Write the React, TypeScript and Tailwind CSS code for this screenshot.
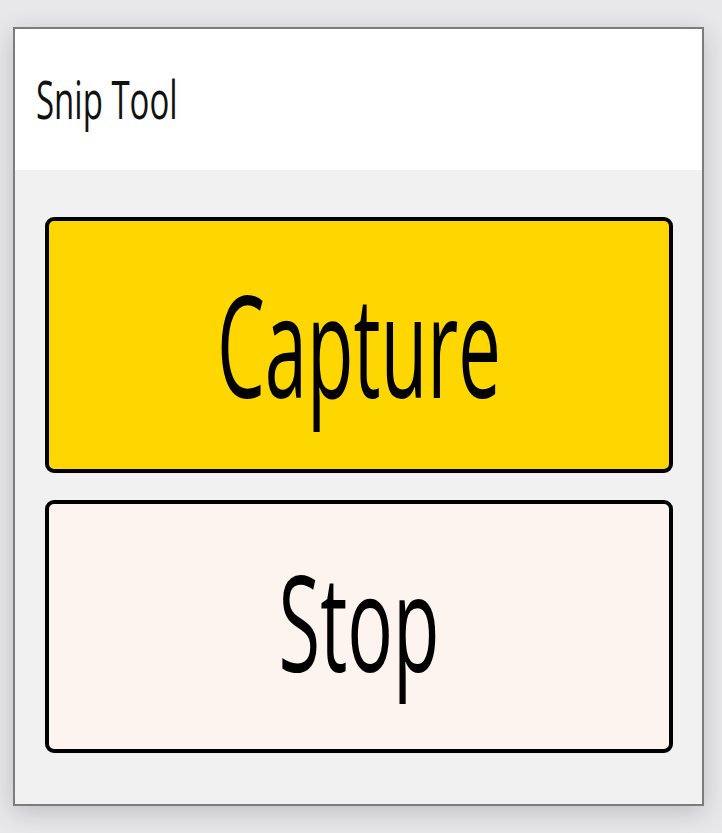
import React from 'react';

const App = () => {
    return (
        <div className="w-[722px] h-[833px] bg-[#e8e8ea] pt-[27px] pl-[13px]" style={{ fontFamily: '"Open Sans", "Noto Sans", sans-serif' }}>
            <div className="w-[691px] h-[779px] border-2 border-[#7c7c7c] bg-[#f1f1f1] flex flex-col shadow-[0_6px_24px_rgba(0,0,0,0.18)]">
                {/* Title bar */}
                <div className="h-[141px] bg-white flex items-center pl-[21px] pb-[2px]">
                    <span className="inline-block text-[33px] leading-none text-[#111] scale-y-[1.6] origin-center">Snip Tool</span>
                </div>

                {/* Buttons */}
                <div className="flex flex-col gap-[27px] pt-[47px] pl-[30px] pr-[29px]">
                    <button className="h-[256px] rounded-[9px] border-4 border-black bg-[#ffd700] flex items-center justify-center pb-[2px]">
                        <span className="inline-block text-[76px] leading-none text-black font-medium scale-y-[1.85]">Capture</span>
                    </button>
                    <button className="h-[253px] rounded-[9px] border-4 border-black bg-[#fef4ef] flex items-center justify-center pb-[12px]">
                        <span className="inline-block text-[76px] leading-none text-black font-medium scale-y-[1.75]">Stop</span>
                    </button>
                </div>
            </div>
        </div>
    );
};

export default App;
